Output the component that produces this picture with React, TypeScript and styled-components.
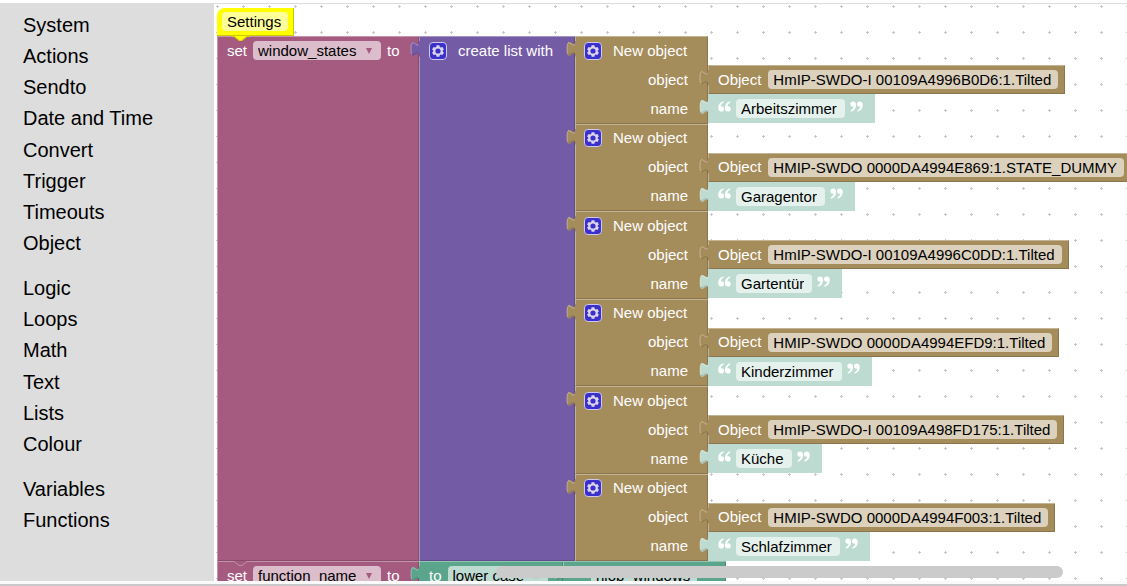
import React from "react";
import styled, { createGlobalStyle } from "styled-components";

const MAUVE = "#a55b80";
const PURPLE = "#745ba5";
const SAND = "#a58c5b";
const GREEN = "#5ba58c";
const MINT = "#bddbd1";

const GlobalStyle = createGlobalStyle`
  *, *::before, *::after { box-sizing: border-box; }
  body {
    margin: 0;
    background: #fff;
    color: #000;
    font: 15px/18px "Liberation Sans", Arial, sans-serif;
  }
`;

const Page = styled.div`
  height: 100vh;
  padding-top: 3px;
  display: flex;
  flex-direction: column;
`;

const Editor = styled.main`
  flex: 1;
  min-height: 0;
  display: flex;
  border-top: 1px solid #dcdcdc;
`;

const BottomRule = styled.div`
  flex: none;
  height: 5px;
  border-top: 3px solid #fafafa;
  background: #c9c9c9;
`;

const Toolbox = styled.nav`
  flex: none;
  width: 214px;
  padding-top: 5px;
  background: #ddd;
`;

const CategoryGroup = styled.ul<{ $height: number }>`
  height: ${(p) => p.$height}px;
  margin: 0;
  padding: 0;
  list-style: none;
  display: grid;
  grid-auto-rows: 1fr;

  & + & { margin-top: 13px; position: relative; }
  & + &::before {
    content: "";
    position: absolute;
    top: -8px;
    left: 0;
    right: 0;
    height: 1px;
    background: #e6e6e6;
  }
`;

const Category = styled.li`
  display: flex;
  align-items: center;
  padding-left: 23px;
`;

const CategoryLink = styled.a`
  color: #000;
  font-size: 20px;
  line-height: 24px;
  text-decoration: none;
`;

const Workspace = styled.section`
  position: relative;
  flex: 1;
  min-width: 0;
  overflow: hidden;
  padding: 4px 0 0 3px;
`;

const GridLayer = styled.svg`
  position: absolute;
  inset: 0;
  width: 100%;
  height: 100%;
`;

const Stack = styled.div`
  position: relative;
  display: flex;
  flex-direction: column;
  align-items: flex-start;
`;

const CommentBlock = styled.div`
  position: relative;
  z-index: 1;
  height: 28px;
  width: 77px;
  padding: 4px 5px;
  border-radius: 8px 0 0 0;
  background: #ff0;
  box-shadow: inset -1px -1px 0 #cccc00;
`;

const CommentInput = styled.input`
  display: block;
  width: 66px;
  height: 19px;
  padding: 0 5px;
  border: 0;
  border-radius: 4px;
  background: #ffff99;
  color: #000;
  font: inherit;
`;

const Statement = styled.div`
  position: relative;
  display: flex;
  align-items: stretch;
`;

const Block = styled.div<{ $color: string; $width?: number; $flat?: boolean }>`
  position: relative;
  flex: none;
  ${(p) => (p.$width ? `width: ${p.$width}px;` : "")}
  color: #fff;
  background: ${(p) => p.$color};
  box-shadow: ${(p) =>
    p.$flat
      ? "none"
      : "inset 1px 1px 0 rgba(255, 255, 255, 0.35), inset -1px -1px 0 rgba(0, 0, 0, 0.16)"};
`;

const BlockRow = styled.div<{ $pad?: number; $gap?: number }>`
  height: 29px;
  display: flex;
  align-items: center;
  gap: ${(p) => p.$gap ?? 6}px;
  padding-left: ${(p) => p.$pad ?? 10}px;
  white-space: nowrap;
`;

const Picker = styled.span<{ $width: number; $arrow: string; $tint: string }>`
  position: relative;
  width: ${(p) => p.$width}px;
  height: 19px;
  color: ${(p) => p.$arrow};
  border-radius: 4px;
  background: ${(p) => p.$tint};

  svg {
    position: absolute;
    right: 9px;
    top: 7px;
    pointer-events: none;
  }
`;

const PickerSelect = styled.select`
  appearance: none;
  display: block;
  width: 100%;
  height: 19px;
  padding: 0 0 0 5px;
  border: 0;
  background: transparent;
  color: #000;
  font: inherit;
`;

const GearButton = styled.button`
  flex: none;
  width: 18px;
  height: 18px;
  padding: 0;
  border: 1px solid #cfc8ea;
  border-radius: 4px;
  background: #3a30cc;
  color: #ddd6ea;
  display: grid;
  place-items: center;
`;

const Tab = styled.svg`
  position: absolute;
  left: -9px;
  top: 5px;
  width: 10px;
  height: 16px;
`;

const NotchShape = styled.svg`
  position: absolute;
  z-index: 2;
  left: 15px;
  top: 0;
  width: 18px;
  height: 5px;
`;

const ObjectColumn = styled.div`
  flex: none;
  height: 525px;
  display: grid;
  grid-auto-rows: 1fr;
`;

const Entry = styled.div`
  display: flex;
`;

const EntryBlock = styled(Block)`
  display: grid;
  grid-template-rows: repeat(3, 1fr);
`;

const EntryTitle = styled.div`
  display: flex;
  align-items: center;
  gap: 11px;
  padding-left: 9px;
`;

const EntryLabel = styled.label`
  display: flex;
  align-items: center;
  justify-content: flex-end;
  padding-right: 20px;
`;

const EntryValues = styled.div`
  display: grid;
  grid-template-rows: repeat(3, 1fr);
  justify-items: start;
`;

const ObjectValue = styled(Block)`
  grid-row: 2;
  display: flex;
  align-items: center;
  gap: 7px;
  padding: 0 7px 0 10px;
  white-space: nowrap;
`;

const TextValue = styled(Block)`
  grid-row: 3;
  display: flex;
  align-items: center;
  gap: 5px;
  padding: 0 12px 0 10px;
`;

const IdButton = styled.button`
  height: 19px;
  padding: 0 7px 0 5px;
  border: 0;
  border-radius: 4px;
  background: #dbd1bd;
  color: #000;
  font: inherit;
  line-height: 19px;
  white-space: nowrap;
`;

const NameInput = styled.input`
  field-sizing: content;
  height: 19px;
  padding: 0 8px 0 5px;
  border: 0;
  border-radius: 4px;
  background: #e5f1ed;
  color: #000;
  font: inherit;
`;

const QuoteMark = styled.svg`
  flex: none;
  width: 13px;
  height: 11px;
  margin-bottom: 5px;
`;

const Scrollbar = styled.div`
  position: absolute;
  left: 282px;
  right: 64px;
  bottom: 3px;
  height: 12px;
  border-radius: 6px;
  background: #cbcbcb;
`;

function Grid() {
  return (
    <GridLayer aria-hidden="true">
      <defs>
        <pattern id="grid" width="26" height="26" patternUnits="userSpaceOnUse" x="-10" y="-11">
          <path d="M12 13.5h3M13.5 12v3" stroke="#c8c8c8" strokeWidth="1" />
        </pattern>
      </defs>
      <rect width="100%" height="100%" fill="url(#grid)" />
    </GridLayer>
  );
}

function PuzzleTab({ color }: { color: string }) {
  return (
    <Tab viewBox="0 0 10 16" aria-hidden="true">
      <path d="M9 0C9 10 1 -8 1 8S9 5 9 15.500H10V0Z" fill={color} />
      <path
        d="M8.500 3.500C7 7 1 -5 1 8C1 11 1.300 12.800 2 13.500"
        fill="none"
        stroke="#fff"
        strokeOpacity="0.35"
      />
      <path d="M2 13.500C4 14.500 8 8.500 9 14" fill="none" stroke="#000" strokeOpacity="0.16" />
    </Tab>
  );
}

function Notch({ color, line }: { color: string; line: string }) {
  return (
    <NotchShape viewBox="0 0 18 5" aria-hidden="true">
      <path d="M0 0H2L7 4H10L15 0H18Z" fill={color} />
      <path d="M0 0.500H2L7 4.500H10L15 0.500H18" fill="none" stroke={line} />
    </NotchShape>
  );
}

function Gear() {
  return (
    <GearButton type="button" aria-label="Edit block">
      <svg width="14" height="14" viewBox="0 0 14 14" aria-hidden="true">
        <path
          fill="currentColor"
          fillRule="evenodd"
          d="M5.600 1.300H8.400L8.800 3L9.900 3.600L11.500 3.100L12.900 5.500L11.700 6.600V7.400L12.900 8.500L11.500 10.900L9.900 10.400L8.800 11L8.400 12.700H5.600L5.200 11L4.100 10.400L2.500 10.900L1.100 8.500L2.300 7.400V6.600L1.100 5.500L2.500 3.100L4.100 3.600L5.200 3ZM7 4.400A2.600 2.600 0 1 0 7 9.600A2.600 2.600 0 1 0 7 4.400Z"
        />
      </svg>
    </GearButton>
  );
}

function Quote({ closing = false }: { closing?: boolean }) {
  return (
    <QuoteMark viewBox="0 0 13 11" aria-hidden="true">
      <g fill="#fff" transform={closing ? "rotate(180 6.5 5.5)" : undefined}>
        <path d="M5.300 0.300C2 1.200 0.200 4 0.200 7C0.200 9.300 1.400 10.600 3.200 10.600C4.900 10.600 6 9.500 6 7.900C6 6.300 4.900 5.300 3.500 5.300C3.200 5.300 2.900 5.300 2.700 5.400C3 3.700 4 2.400 5.800 1.300Z" />
        <path d="M12 0.300C8.700 1.200 6.900 4 6.900 7C6.900 9.300 8.100 10.600 9.900 10.600C11.600 10.600 12.700 9.500 12.700 7.900C12.700 6.300 11.600 5.300 10.200 5.300C9.900 5.300 9.600 5.300 9.400 5.400C9.700 3.700 10.700 2.400 12.500 1.300Z" />
      </g>
    </QuoteMark>
  );
}

interface DropdownProps {
  label: string;
  value: string;
  width: number;
  arrow: string;
  tint: string;
}

function Dropdown({ label, value, width, arrow, tint }: DropdownProps) {
  return (
    <Picker $width={width} $arrow={arrow} $tint={tint}>
      <PickerSelect aria-label={label} defaultValue={value}>
        <option>{value}</option>
      </PickerSelect>
      <svg width="6" height="6" viewBox="0 0 6 6" aria-hidden="true">
        <path d="M0 0H6L3 6Z" fill="currentColor" />
      </svg>
    </Picker>
  );
}

const groups = [
  {
    height: 250,
    items: ["System", "Actions", "Sendto", "Date and Time", "Convert", "Trigger", "Timeouts", "Object"],
  },
  { height: 188, items: ["Logic", "Loops", "Math", "Text", "Lists", "Colour"] },
  { height: 63, items: ["Variables", "Functions"] },
];

const entries = [
  { id: "HmIP-SWDO-I 00109A4996B0D6:1.Tilted", name: "Arbeitszimmer" },
  { id: "HMIP-SWDO 0000DA4994E869:1.STATE_DUMMY", name: "Garagentor" },
  { id: "HmIP-SWDO-I 00109A4996C0DD:1.Tilted", name: "Gartentür" },
  { id: "HMIP-SWDO 0000DA4994EFD9:1.Tilted", name: "Kinderzimmer" },
  { id: "HmIP-SWDO-I 00109A498FD175:1.Tilted", name: "Küche" },
  { id: "HMIP-SWDO 0000DA4994F003:1.Tilted", name: "Schlafzimmer" },
];

export default function App() {
  return (
    <Page>
      <GlobalStyle />
      <Editor>
        <Toolbox aria-label="Block categories">
          {groups.map((group) => (
            <CategoryGroup key={group.items[0]} $height={group.height}>
              {group.items.map((item) => (
                <Category key={item}>
                  <CategoryLink href="#">{item}</CategoryLink>
                </Category>
              ))}
            </CategoryGroup>
          ))}
        </Toolbox>

        <Workspace>
          <Grid />
          <Stack>
            <CommentBlock>
              <CommentInput aria-label="Comment" defaultValue="Settings" />
            </CommentBlock>

            <Statement>
              <Notch color="#ff0" line="#d8d800" />
              <Block $color={MAUVE} $width={202}>
                <BlockRow>
                  set
                  <Dropdown label="Variable" value="window_states" width={128} arrow={MAUVE} tint="#dbbdcc" />
                  to
                </BlockRow>
              </Block>
              <Block $color={PURPLE} $width={156}>
                <PuzzleTab color={PURPLE} />
                <BlockRow $gap={11}>
                  <Gear />
                  create list with
                </BlockRow>
              </Block>
              <ObjectColumn>
                {entries.map((entry, i) => (
                  <Entry key={entry.id}>
                    <EntryBlock $color={SAND} $width={133}>
                      <PuzzleTab color={SAND} />
                      <EntryTitle>
                        <Gear />
                        New object
                      </EntryTitle>
                      <EntryLabel htmlFor={`object-${i}`}>object</EntryLabel>
                      <EntryLabel htmlFor={`name-${i}`}>name</EntryLabel>
                    </EntryBlock>
                    <EntryValues>
                      <ObjectValue $color={SAND}>
                        <PuzzleTab color={SAND} />
                        Object
                        <IdButton type="button" id={`object-${i}`}>{entry.id}</IdButton>
                      </ObjectValue>
                      <TextValue $color={MINT} $flat>
                        <PuzzleTab color={MINT} />
                        <Quote />
                        <NameInput id={`name-${i}`} defaultValue={entry.name} />
                        <Quote closing />
                      </TextValue>
                    </EntryValues>
                  </Entry>
                ))}
              </ObjectColumn>
            </Statement>

            <Statement>
              <Notch color={MAUVE} line="#c08ca6" />
              <Block $color={MAUVE} $width={202}>
                <BlockRow>
                  set
                  <Dropdown label="Variable" value="function_name" width={128} arrow={MAUVE} tint="#dbbdcc" />
                  to
                </BlockRow>
              </Block>
              <Block $color={GREEN} $width={144}>
                <PuzzleTab color={GREEN} />
                <BlockRow>
                  to
                  <Dropdown label="Letter case" value="lower case" width={100} arrow={GREEN} tint={MINT} />
                </BlockRow>
              </Block>
              <Block $color={GREEN} $width={163}>
                <PuzzleTab color={GREEN} />
                <BlockRow $pad={28}>
                  <Dropdown label="Text source" value="hlob_windows" width={106} arrow={GREEN} tint={MINT} />
                </BlockRow>
              </Block>
            </Statement>
          </Stack>
          <Scrollbar />
        </Workspace>
      </Editor>
      <BottomRule />
    </Page>
  );
}
